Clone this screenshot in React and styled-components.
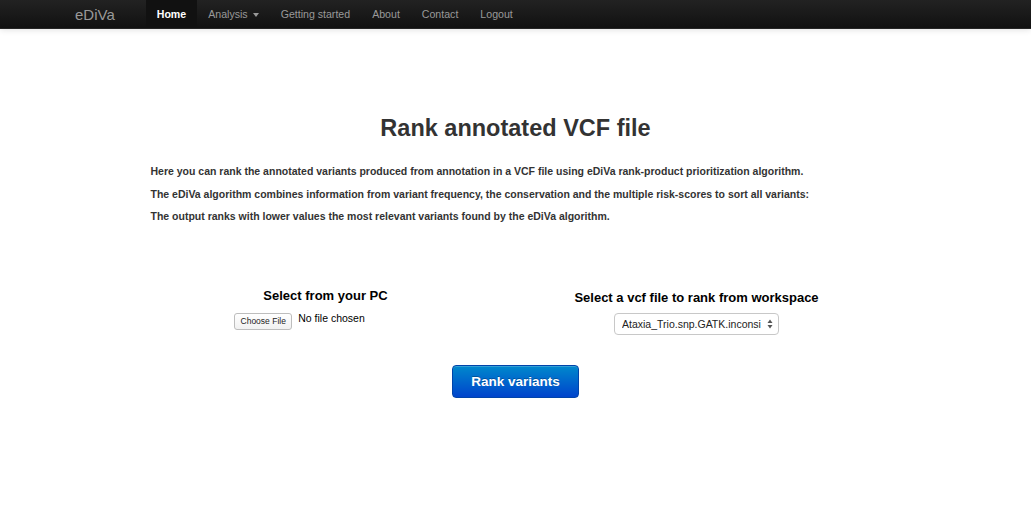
import React from "react";
import styled, { createGlobalStyle } from "styled-components";

const Global = createGlobalStyle`
  html, body { margin: 0; padding: 0; background: #fff; }
  body { font-family: "Liberation Sans", Arial, Helvetica, sans-serif; color: #333; }
`;

const Navbar = styled.nav`
  height: 28px;
  background-image: linear-gradient(to bottom, #222222, #111111);
  border-bottom: 1px solid #252525;
  box-shadow: 0 1px 6px rgba(0, 0, 0, 0.12);
  display: flex;
  align-items: stretch;
  padding-left: 75px;
`;

const Brand = styled.a`
  display: flex;
  align-items: center;
  font-size: 15px;
  color: #999;
  text-decoration: none;
  margin-right: 31px;
`;

const NavList = styled.ul`
  display: flex;
  list-style: none;
  margin: 0;
  padding: 0;
`;

const NavItem = styled.li`
  display: flex;
  align-items: center;
  padding: 0 11px;
  font-size: 10.6px;
  color: ${(p) => (p.$active ? "#fff" : "#999")};
  background: ${(p) => (p.$active ? "#111" : "transparent")};
  font-weight: ${(p) => (p.$active ? "bold" : "normal")};
  gap: 5px;
`;

const Caret = styled.span`
  display: inline-block;
  width: 0;
  height: 0;
  border-left: 3.5px solid transparent;
  border-right: 3.5px solid transparent;
  border-top: 4px solid #999;
  margin-top: 1px;
`;

const Main = styled.main`
  width: 730px;
  margin: 0 auto;
  padding-top: 85px;
`;

const Title = styled.h1`
  margin: 0;
  text-align: center;
  font-size: 23.5px;
  line-height: 28px;
  font-weight: bold;
  color: #333;
`;

const Intro = styled.div`
  margin-top: 18px;
`;

const Line = styled.p`
  margin: 0;
  font-size: 10.5px;
  font-weight: bold;
  line-height: 22.5px;
  color: #333;
`;

const Columns = styled.div`
  display: grid;
  grid-template-columns: 350px 392px;
  margin-top: 60px;
`;

const Column = styled.div`
  display: flex;
  flex-direction: column;
  align-items: center;
  padding-top: ${(p) => p.$offset || 0}px;
`;

const ColHead = styled.h3`
  margin: 0;
  font-size: 13px;
  line-height: 16px;
  font-weight: bold;
  color: #000;
`;

const FileRow = styled.div`
  display: flex;
  align-items: flex-start;
  gap: 6px;
  margin-top: 8px;
  margin-left: -52px;
`;

const FileButton = styled.span`
  display: inline-flex;
  align-items: center;
  justify-content: center;
  width: 58px;
  height: 17px;
  box-sizing: border-box;
  border: 1px solid #bdbdbd;
  border-radius: 3px;
  background: linear-gradient(to bottom, #ffffff, #f1f1f1);
  font-size: 8.5px;
  color: #222;
  margin-top: 1px;
`;

const FileStatus = styled.span`
  font-size: 10.5px;
  line-height: 13px;
  color: #000;
`;

const SelectWrap = styled.div`
  position: relative;
  margin-top: 7px;
  width: 165px;
  height: 22px;
`;

const Select = styled.select`
  appearance: none;
  -webkit-appearance: none;
  width: 165px;
  height: 22px;
  box-sizing: border-box;
  border: 1px solid #c8c8c8;
  border-radius: 4px;
  background: #fff;
  font-family: "Liberation Sans", Arial, sans-serif;
  font-size: 10.5px;
  color: #222;
  padding: 0 16px 0 7px;
  white-space: nowrap;
  overflow: hidden;
  text-overflow: clip;
`;

const Arrows = styled.svg`
  position: absolute;
  right: 6px;
  top: 6px;
  pointer-events: none;
`;

const Actions = styled.div`
  display: flex;
  justify-content: center;
  margin-top: 30px;
`;

const PrimaryButton = styled.button`
  width: 127px;
  height: 33px;
  border: 1px solid #0044aa;
  border-radius: 4px;
  background-image: linear-gradient(to bottom, #0088cc, #0044cc);
  color: #fff;
  font-family: "Liberation Sans", Arial, sans-serif;
  font-size: 13.5px;
  font-weight: bold;
  text-shadow: 0 -1px 0 rgba(0, 0, 0, 0.25);
  box-shadow: inset 0 1px 0 rgba(255, 255, 255, 0.2);
`;

export default function App() {
  return (
    <>
      <Global />
      <Navbar>
        <Brand href="#">eDiVa</Brand>
        <NavList>
          <NavItem $active>Home</NavItem>
          <NavItem>
            Analysis <Caret />
          </NavItem>
          <NavItem>Getting started</NavItem>
          <NavItem>About</NavItem>
          <NavItem>Contact</NavItem>
          <NavItem>Logout</NavItem>
        </NavList>
      </Navbar>
      <Main>
        <Title>Rank annotated VCF file</Title>
        <Intro>
          <Line>
            Here you can rank the annotated variants produced from annotation in a VCF file using eDiVa
            rank-product prioritization algorithm.
          </Line>
          <Line>
            The eDiVa algorithm combines information from variant frequency, the conservation and the
            multiple risk-scores to sort all variants:
          </Line>
          <Line>The output ranks with lower values the most relevant variants found by the eDiVa algorithm.</Line>
        </Intro>
        <Columns>
          <Column>
            <ColHead>Select from your PC</ColHead>
            <FileRow>
              <FileButton>Choose File</FileButton>
              <FileStatus>No file chosen</FileStatus>
            </FileRow>
          </Column>
          <Column $offset={2}>
            <ColHead>Select a vcf file to rank from workspace</ColHead>
            <SelectWrap>
              <Select defaultValue="a">
                <option value="a">Ataxia_Trio.snp.GATK.inconsi</option>
              </Select>
              <Arrows width="6" height="10" viewBox="0 0 6 10">
                <path d="M3 0.5 L5.5 4 L0.5 4 Z" fill="#555" />
                <path d="M3 9.5 L5.5 6 L0.5 6 Z" fill="#555" />
              </Arrows>
            </SelectWrap>
          </Column>
        </Columns>
        <Actions>
          <PrimaryButton>Rank variants</PrimaryButton>
        </Actions>
      </Main>
    </>
  );
}
